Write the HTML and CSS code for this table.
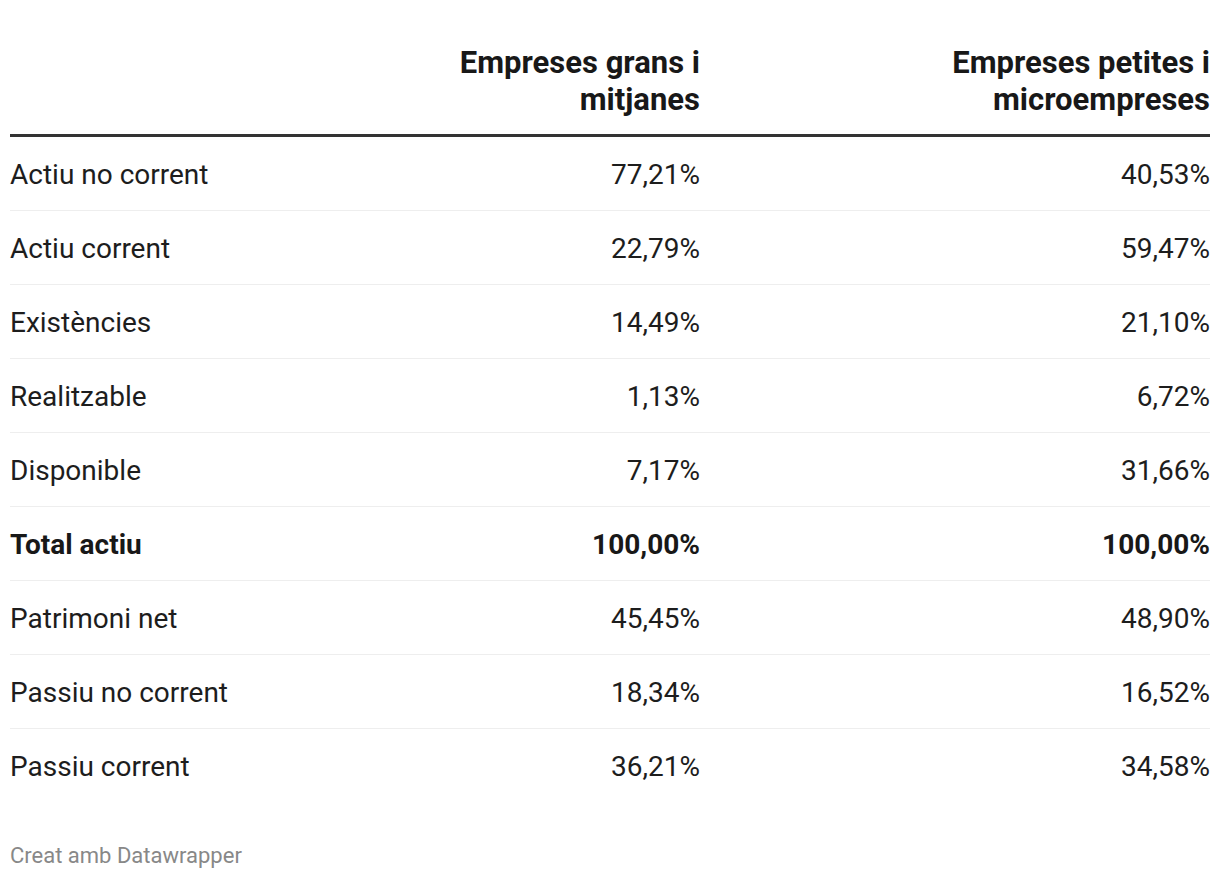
FILE: index.html
```html
<!DOCTYPE html>
<html lang="ca">
<head>
<meta charset="utf-8">
<title>Taula</title>
<link rel="stylesheet" href="styles.css">
</head>
<body>
<div class="chart">
  <table class="tbl">
    <thead>
      <tr>
        <th class="c-label"></th>
        <th class="c-num c-mid"><span class="hd">Empreses grans i mitjanes</span></th>
        <th class="c-num c-last"><span class="hd">Empreses petites i microempreses</span></th>
      </tr>
    </thead>
    <tbody>
      <tr><td class="c-label">Actiu no corrent</td><td class="c-num">77,21%</td><td class="c-num">40,53%</td></tr>
      <tr><td class="c-label">Actiu corrent</td><td class="c-num">22,79%</td><td class="c-num">59,47%</td></tr>
      <tr><td class="c-label">Existències</td><td class="c-num">14,49%</td><td class="c-num">21,10%</td></tr>
      <tr><td class="c-label">Realitzable</td><td class="c-num">1,13%</td><td class="c-num">6,72%</td></tr>
      <tr><td class="c-label">Disponible</td><td class="c-num">7,17%</td><td class="c-num">31,66%</td></tr>
      <tr class="bold"><td class="c-label">Total actiu</td><td class="c-num">100,00%</td><td class="c-num">100,00%</td></tr>
      <tr><td class="c-label">Patrimoni net</td><td class="c-num">45,45%</td><td class="c-num">48,90%</td></tr>
      <tr><td class="c-label">Passiu no corrent</td><td class="c-num">18,34%</td><td class="c-num">16,52%</td></tr>
      <tr class="last"><td class="c-label">Passiu corrent</td><td class="c-num">36,21%</td><td class="c-num">34,58%</td></tr>
    </tbody>
  </table>
  <div class="footer">Creat amb Datawrapper</div>
</div>
</body>
</html>
```

FILE: styles.css
```css
html, body {
  margin: 0;
  padding: 0;
  background: #ffffff;
}

body {
  font-family: Roboto, "Liberation Sans", sans-serif;
  color: #1d1d1d;
}

.chart {
  width: 1200px;
  padding: 44px 10px 0 10px;
}

.tbl {
  width: 1200px;
  border-collapse: collapse;
  table-layout: fixed;
  font-size: 28px;
  line-height: 36px;
}

.tbl th,
.tbl td {
  padding: 0;
}

.c-mid {
  width: 250px;
}

.c-last {
  width: 510px;
}

.tbl thead th {
  font-weight: 700;
  font-size: 31px;
  line-height: 37px;
  color: #181818;
  vertical-align: bottom;
  padding-bottom: 16px;
  border-bottom: 3px solid #333333;
}

.hd {
  display: inline-block;
  max-width: 264px;
  text-align: right;
}

.c-label {
  text-align: left;
}

.c-num {
  text-align: right;
}

.tbl tbody td {
  padding-top: 20px;
  padding-bottom: 17px;
  border-bottom: 1px solid #eeeeee;
  font-weight: 400;
}

.tbl tbody tr.bold td {
  font-weight: 700;
  color: #181818;
}

.tbl tbody tr.last td {
  border-bottom: none;
}

.footer {
  margin-top: 41px;
  font-size: 22px;
  line-height: 26px;
  color: #888888;
}
```
